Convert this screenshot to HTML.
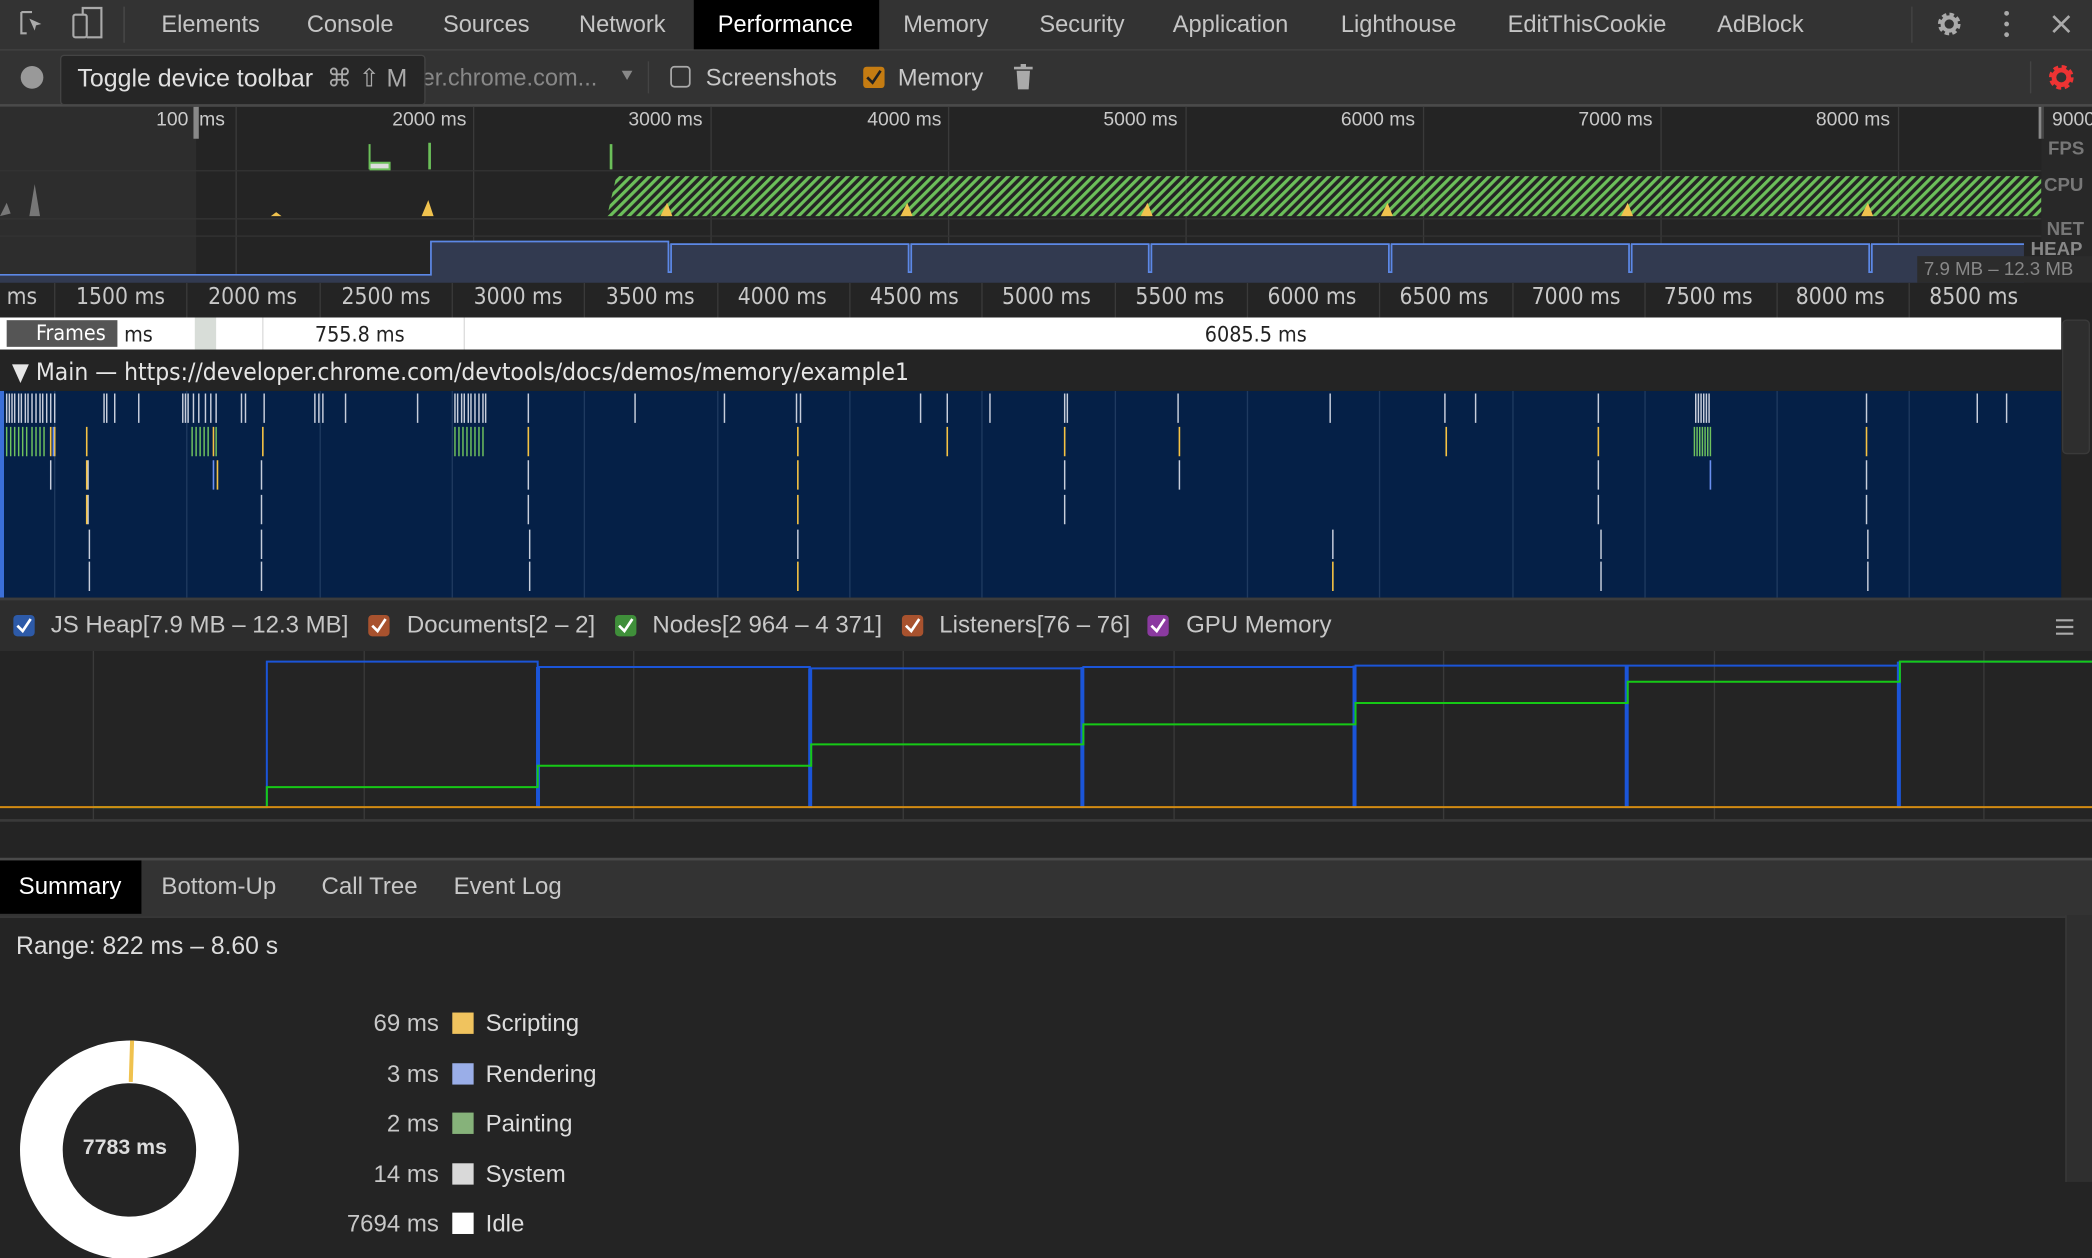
<!DOCTYPE html>
<html><head><meta charset="utf-8">
<style>
html,body{margin:0;padding:0;background:#242424;overflow:hidden;width:2092px;height:1258px}
#w{position:absolute;left:0;top:0;width:1568px;height:943px;transform:scale(1.33418,1.33404);transform-origin:0 0;font-family:"Liberation Sans",Arial,sans-serif;color:#c8c8c8}
.a{position:absolute;white-space:nowrap}
.t{font-size:17.7px;top:8px;color:#c5c5c5}
svg{position:absolute;left:0;top:0}
.r{top:213px;font-size:17px;font-family:'DejaVu Sans Condensed','DejaVu Sans',sans-serif}
.o{top:82px;font-size:14.5px}
.l{top:458px;font-size:18px}
</style></head><body><div id="w">
<!-- tab bar -->
<div class="a" style="left:0;top:0;width:1568px;height:37px;background:#333;border-bottom:1px solid #444"></div>
<svg width="100" height="37"><path d="M16 9h8M16 9v16h4" stroke="#aaa" stroke-width="1.6" fill="none"/><path d="M22 14l9 4-4 1-1 4z" fill="#aaa"/><rect x="55" y="11" width="10" height="17" rx="1.5" stroke="#aaa" stroke-width="1.6" fill="none"/><path d="M62 11V6h14v22H65" stroke="#aaa" stroke-width="1.6" fill="none"/><line x1="93" y1="5" x2="93" y2="32" stroke="#4a4a4a"/></svg>
<div class="a" style="left:520px;top:0;width:139px;height:37px;background:#000"></div>
<div class="a t" style="left:121px">Elements</div>
<div class="a t" style="left:230px">Console</div>
<div class="a t" style="left:332px">Sources</div>
<div class="a t" style="left:434px">Network</div>
<div class="a t" style="left:538px;color:#fff">Performance</div>
<div class="a t" style="left:677px">Memory</div>
<div class="a t" style="left:779px">Security</div>
<div class="a t" style="left:879px">Application</div>
<div class="a t" style="left:1005px">Lighthouse</div>
<div class="a t" style="left:1130px">EditThisCookie</div>
<div class="a t" style="left:1287px">AdBlock</div>
<svg style="left:1430px" width="138" height="37"><line x1="3" y1="5" x2="3" y2="32" stroke="#444"/><circle cx="31" cy="18" r="6.5" fill="none" stroke="#aaa" stroke-width="4" stroke-dasharray="3 2.1"/><circle cx="31" cy="18" r="5" fill="none" stroke="#aaa" stroke-width="3"/><circle cx="74" cy="10" r="1.8" fill="#aaa"/><circle cx="74" cy="18" r="1.8" fill="#aaa"/><circle cx="74" cy="26" r="1.8" fill="#aaa"/><path d="M109 12l12 12M121 12l-12 12" stroke="#aaa" stroke-width="2"/></svg>
<!-- toolbar -->
<div class="a" style="left:0;top:38px;width:1568px;height:40px;background:#333;border-bottom:2px solid #4a4a4a"></div>
<svg style="top:38px" width="1568" height="40"><circle cx="24" cy="20" r="8.5" fill="#999"/><path d="M466 15h8l-4 7z" fill="#888"/><line x1="486" y1="8" x2="486" y2="32" stroke="#444"/><rect x="503" y="12" width="14" height="15" rx="2.5" fill="none" stroke="#aaa" stroke-width="1.3"/><rect x="647" y="12" width="16" height="16" rx="2.5" fill="#c57c12"/><path d="M650 20l4 4 6-9" stroke="#222" stroke-width="2" fill="none"/><path d="M760 13h14M765 11h4" stroke="#aaa" stroke-width="2"/><path d="M762 15h10l-1 14h-8z" fill="#aaa"/><line x1="1522" y1="8" x2="1522" y2="32" stroke="#444"/><circle cx="1545" cy="20" r="7" fill="none" stroke="#e33" stroke-width="4.5" stroke-dasharray="3.2 2.3"/><circle cx="1545" cy="20" r="5.5" fill="none" stroke="#e33" stroke-width="3.5"/></svg>
<div class="a" style="left:316px;top:48px;font-size:17.7px;color:#888">er.chrome.com...</div>
<div class="a" style="left:45px;top:41px;width:272px;height:36px;background:#262626;border:1px solid #444;border-radius:3px"></div>
<div class="a" style="left:58px;top:48px;font-size:18.7px;color:#e0e0e0">Toggle device toolbar <span style="color:#aaa">&nbsp;⌘ ⇧ M</span></div>
<div class="a" style="left:529px;top:48px;font-size:17.7px">Screenshots</div>
<div class="a" style="left:673px;top:48px;font-size:17.7px">Memory</div>
<!-- overview -->
<svg style="top:80px" width="1568" height="132">
<defs><pattern id="h" width="5" height="5" patternUnits="userSpaceOnUse" patternTransform="rotate(45)"><rect width="2.4" height="5" fill="#6cbf5a"/></pattern></defs>
<rect x="0" y="0" width="147" height="132" fill="#2d2d2d"/>
<g stroke="#3a3a3a"><line x1="177" y1="0" x2="177" y2="132"/><line x1="355" y1="0" x2="355" y2="132"/><line x1="533" y1="0" x2="533" y2="132"/><line x1="711" y1="0" x2="711" y2="132"/><line x1="889" y1="0" x2="889" y2="132"/><line x1="1067" y1="0" x2="1067" y2="132"/><line x1="1245" y1="0" x2="1245" y2="132"/><line x1="1423" y1="0" x2="1423" y2="132"/></g>
<line x1="0" y1="48" x2="1530" y2="48" stroke="#333"/><line x1="0" y1="84" x2="1530" y2="84" stroke="#333"/><line x1="0" y1="97" x2="1530" y2="97" stroke="#333"/>
<path d="M277 28v19M277 47h15v-5h-15" stroke="#6bbf59" fill="#ddd" stroke-width="1.5"/><path d="M322 27v20M458 28v19" stroke="#6bbf59" stroke-width="2"/>
<path d="M455 82L462 52H1530V82Z" fill="url(#h)"/>
<path d="M0 82l5-10 3 8zM22 82l4-24 4 24z" fill="#777"/>
<g fill="#f0c24e"><path d="M316 82l5-12 4 12zM495 82l5-10 4 10zM675 82l5-10 4 10zM855 82l5-10 4 10zM1035 82l5-10 4 10zM1215 82l5-10 4 10zM1395 82l5-10 4 10zM203 82l4-3 4 3z"/></g>
<path d="M0 126H323V101H501V103H681V103H861V103H1041V103H1221V103H1401V103H1517V132H0Z" fill="#323a50"/>
<path d="M0 126H323V101H501V124H503V103H681V124H683V103H861V124H863V103H1041V124H1043V103H1221V124H1223V103H1401V124H1403V103H1517" stroke="#5c88e6" fill="none" stroke-width="1.3"/>
<rect x="145" y="0" width="4" height="24" fill="#888"/><rect x="1528" y="0" width="4" height="24" fill="#888"/>
<rect x="1530" y="0" width="38" height="132" fill="#2b2b2b" opacity=".7"/>
<rect x="1437" y="112" width="131" height="20" fill="#2c2c2c"/>
</svg>
<div class="a o" style="left:117px;color:#ccc">100&nbsp;&nbsp;ms</div>
<div class="a o" style="left:294px">2000 ms</div>
<div class="a o" style="left:471px">3000 ms</div>
<div class="a o" style="left:650px">4000 ms</div>
<div class="a o" style="left:827px">5000 ms</div>
<div class="a o" style="left:1005px">6000 ms</div>
<div class="a o" style="left:1183px">7000 ms</div>
<div class="a o" style="left:1361px">8000 ms</div>
<div class="a o" style="left:1538px">9000</div>
<div class="a" style="top:103px;left:1535px;font-size:14px;font-weight:bold;color:#777">FPS</div>
<div class="a" style="top:130px;left:1532px;font-size:14px;font-weight:bold;color:#777">CPU</div>
<div class="a" style="top:163px;left:1534px;font-size:14px;font-weight:bold;color:#777">NET</div>
<div class="a" style="top:178px;left:1522px;font-size:14px;font-weight:bold;color:#888">HEAP</div>
<div class="a" style="top:193px;left:1442px;font-size:14px;color:#888">7.9 MB – 12.3 MB</div>
<!-- ruler2 -->
<svg style="top:212px" width="1568" height="240">
<rect x="0" y="0" width="1568" height="26" fill="#242424"/>
<g stroke="#3a3a3a"><line x1="41" y1="0" x2="41" y2="26"/><line x1="140" y1="0" x2="140" y2="26"/><line x1="240" y1="0" x2="240" y2="26"/><line x1="339" y1="0" x2="339" y2="26"/><line x1="438" y1="0" x2="438" y2="26"/><line x1="538" y1="0" x2="538" y2="26"/><line x1="637" y1="0" x2="637" y2="26"/><line x1="736" y1="0" x2="736" y2="26"/><line x1="836" y1="0" x2="836" y2="26"/><line x1="935" y1="0" x2="935" y2="26"/><line x1="1034" y1="0" x2="1034" y2="26"/><line x1="1134" y1="0" x2="1134" y2="26"/><line x1="1233" y1="0" x2="1233" y2="26"/><line x1="1332" y1="0" x2="1332" y2="26"/><line x1="1431" y1="0" x2="1431" y2="26"/></g>
<rect x="0" y="26" width="1545" height="24" fill="#fff"/>
<rect x="5" y="28" width="83" height="20" fill="#555"/>
<rect x="146" y="26" width="16" height="24" fill="#d8ddd8"/>
<line x1="197" y1="26" x2="197" y2="50" stroke="#ddd"/><line x1="348" y1="26" x2="348" y2="50" stroke="#ddd"/>
<rect x="1545" y="26" width="23" height="210" fill="#242424"/><rect x="1546" y="28" width="20" height="100" rx="3" fill="#2e2e2e" stroke="#3a3a3a"/>
</svg>
<div class="a r" style="left:5px">ms</div>
<div class="a r" style="left:57px">1500 ms</div>
<div class="a r" style="left:156px">2000 ms</div>
<div class="a r" style="left:256px">2500 ms</div>
<div class="a r" style="left:355px">3000 ms</div>
<div class="a r" style="left:454px">3500 ms</div>
<div class="a r" style="left:553px">4000 ms</div>
<div class="a r" style="left:652px">4500 ms</div>
<div class="a r" style="left:751px">5000 ms</div>
<div class="a r" style="left:851px">5500 ms</div>
<div class="a r" style="left:950px">6000 ms</div>
<div class="a r" style="left:1049px">6500 ms</div>
<div class="a r" style="left:1148px">7000 ms</div>
<div class="a r" style="left:1247px">7500 ms</div>
<div class="a r" style="left:1346px">8000 ms</div>
<div class="a r" style="left:1446px">8500 ms</div>
<div class="a" style="top:240px;left:27px;font-size:16px;color:#fff;font-family:'DejaVu Sans Condensed','DejaVu Sans',sans-serif">Frames</div>
<div class="a" style="top:241px;left:93px;font-size:16px;color:#222;font-family:'DejaVu Sans Condensed','DejaVu Sans',sans-serif">ms</div>
<div class="a" style="top:241px;left:236px;font-size:16px;color:#222;font-family:'DejaVu Sans Condensed','DejaVu Sans',sans-serif">755.8 ms</div>
<div class="a" style="top:241px;left:903px;font-size:16px;color:#222;font-family:'DejaVu Sans Condensed','DejaVu Sans',sans-serif">6085.5 ms</div>
<!-- main -->
<div class="a" style="left:0;top:263px;width:1545px;height:30px;background:#242424"></div>
<div class="a" style="top:269px;left:9px;font-size:18.3px;color:#e6e6e6;font-family:'DejaVu Sans Condensed','DejaVu Sans',sans-serif">▼ Main — https://developer.chrome.com/devtools/docs/demos/memory/example1</div>
<svg style="top:293px" width="1545" height="155">
<rect width="1545" height="155" fill="#052047"/>
<rect width="3" height="155" fill="#3b6fd8"/>
<g stroke="#1f3a60"><line x1="41" y1="0" x2="41" y2="155"/><line x1="140" y1="0" x2="140" y2="155"/><line x1="240" y1="0" x2="240" y2="155"/><line x1="339" y1="0" x2="339" y2="155"/><line x1="438" y1="0" x2="438" y2="155"/><line x1="538" y1="0" x2="538" y2="155"/><line x1="637" y1="0" x2="637" y2="155"/><line x1="736" y1="0" x2="736" y2="155"/><line x1="836" y1="0" x2="836" y2="155"/><line x1="935" y1="0" x2="935" y2="155"/><line x1="1034" y1="0" x2="1034" y2="155"/><line x1="1134" y1="0" x2="1134" y2="155"/><line x1="1233" y1="0" x2="1233" y2="155"/><line x1="1332" y1="0" x2="1332" y2="155"/><line x1="1431" y1="0" x2="1431" y2="155"/></g>
<g stroke="#c8cedc" stroke-width="1.1">
<path d="M5 2v22M7 2v22M9 2v22M11 2v22M14 2v22M16 2v22M19 2v22M21 2v22M24 2v22M27 2v22M30 2v22M32 2v22M35 2v22M38 2v22M41 2v22M78 2v22M80 2v22M86 2v22M104 2v22M137 2v22M139 2v22M141 2v22M145 2v22M149 2v22M154 2v22M158 2v22M162 2v22M181 2v22M184 2v22M198 2v22M236 2v22M239 2v22M242 2v22M259 2v22M313 2v22M341 2v22M343 2v22M346 2v22M348 2v22M351 2v22M353 2v22M356 2v22M359 2v22M362 2v22M364 2v22M396 2v22M476 2v22M543 2v22M597 2v22M600 2v22M690 2v22M710 2v22M742 2v22M798 2v22M800 2v22M883 2v22M997 2v22M1083 2v22M1106 2v22M1198 2v22M1271 2v22M1273 2v22M1275 2v22M1277 2v22M1279 2v22M1281 2v22M1399 2v22M1482 2v22M1504 2v22"/>
<path d="M38 52v22M66 52v22M66 78v22M196 52v22M196 78v22M196 104v22M196 128v22M396 52v22M396 78v22M397 104v22M397 128v22M798 52v22M798 78v22M884 52v22M1198 52v22M1198 78v22M1200 104v22M1200 128v22M1399 52v22M1399 78v22M1400 104v22M1400 128v22M999 104v22M598 104v22M67 104v22M67 128v22"/>
</g>
<g stroke="#6fc25e" stroke-width="1.1"><path d="M5 27v22M8 27v22M11 27v22M14 27v22M17 27v22M20 27v22M24 27v22M27 27v22M30 27v22M33 27v22M144 27v22M147 27v22M150 27v22M153 27v22M156 27v22M162 27v22M341 27v22M344 27v22M347 27v22M350 27v22M353 27v22M356 27v22M359 27v22M362 27v22M1270 27v22M1272 27v22M1274 27v22M1276 27v22M1278 27v22M1280 27v22M1282 27v22"/></g>
<g stroke="#f5c244" stroke-width="1.2"><path d="M38 27v22M41 27v22M65 27v22M160 27v22M197 27v22M396 27v22M598 27v22M710 27v22M798 27v22M884 27v22M1084 27v22M1198 27v22M1399 27v22M65 52v22M163 52v22M598 52v22M65 78v22M598 78v22M598 128v22M999 128v22"/></g>
<g stroke="#6a8ff0" stroke-width="1.2"><path d="M40 27v22M160 52v22M1282 52v22"/></g>
</svg>
<!-- memory legend -->
<div class="a" style="left:0;top:448px;width:1568px;height:40px;background:#2d2d2d;border-top:2px solid #3c3c3c;border-bottom:2px solid #333"></div>
<svg style="top:450px" width="1568" height="38">
<rect x="10" y="11" width="16" height="16" rx="3" fill="#2d5aa8"/><path d="M13 19l4 4 6-9" stroke="#fff" stroke-width="2" fill="none"/>
<rect x="276" y="11" width="16" height="16" rx="3" fill="#a8522e"/><path d="M279 19l4 4 6-9" stroke="#fff" stroke-width="2" fill="none"/>
<rect x="461" y="11" width="16" height="16" rx="3" fill="#3f8f3a"/><path d="M464 19l4 4 6-9" stroke="#fff" stroke-width="2" fill="none"/>
<rect x="676" y="11" width="16" height="16" rx="3" fill="#a8522e"/><path d="M679 19l4 4 6-9" stroke="#fff" stroke-width="2" fill="none"/>
<rect x="860" y="11" width="16" height="16" rx="3" fill="#8b3aa0"/><path d="M863 19l4 4 6-9" stroke="#fff" stroke-width="2" fill="none"/>
<path d="M1541 15h13M1541 20h13M1541 25h13" stroke="#aaa" stroke-width="1.6"/>
</svg>
<div class="a l" style="left:38px">JS Heap[7.9 MB – 12.3 MB]</div>
<div class="a l" style="left:305px">Documents[2 – 2]</div>
<div class="a l" style="left:489px">Nodes[2 964 – 4 371]</div>
<div class="a l" style="left:704px">Listeners[76 – 76]</div>
<div class="a l" style="left:889px">GPU Memory</div>
<!-- memory graph -->
<svg style="top:488px" width="1568" height="160">
<rect width="1568" height="127" fill="#242424"/>
<g stroke="#3a3a3a"><line x1="70" y1="0" x2="70" y2="127"/><line x1="273" y1="0" x2="273" y2="127"/><line x1="475" y1="0" x2="475" y2="127"/><line x1="677" y1="0" x2="677" y2="127"/><line x1="880" y1="0" x2="880" y2="127"/><line x1="1082" y1="0" x2="1082" y2="127"/><line x1="1285" y1="0" x2="1285" y2="127"/><line x1="1487" y1="0" x2="1487" y2="127"/></g>
<path d="M70 117H200V8H403V117H404V12H607V117H608V13H811V117H812V12H1015V117H1016V11H1219V117H1220V11H1423V117H1424V8H1568" stroke="#1b55d8" stroke-width="1.5" fill="none"/>
<path d="M403 12V117M607 13V117M811 12V117M1015 11V117M1219 11V117M1423 8V117" stroke="#1b55d8" stroke-width="2.5"/>
<path d="M70 117H200V102H403V86H608V70H812V55H1016V39H1220V23H1424V8H1568" stroke="#16c916" stroke-width="1.5" fill="none"/>
<line x1="0" y1="117" x2="1568" y2="117" stroke="#d38b12" stroke-width="1.5"/>
<line x1="0" y1="127" x2="1568" y2="127" stroke="#3a3a3a" stroke-width="2"/>
</svg>
<div class="a" style="left:0;top:643px;width:1568px;height:42px;background:#333;border-top:2px solid #4a4a4a;border-bottom:1px solid #3a3a3a"></div>
<div class="a" style="left:0;top:645px;width:106px;height:40px;background:#000"></div>
<div class="a" style="top:654px;left:14px;font-size:18px;color:#fff">Summary</div>
<div class="a" style="top:654px;left:121px;font-size:18px">Bottom-Up</div>
<div class="a" style="top:654px;left:241px;font-size:18px">Call Tree</div>
<div class="a" style="top:654px;left:340px;font-size:18px">Event Log</div>
<div class="a" style="left:1548px;top:686px;width:20px;height:200px;background:#2f2f2f;border-left:1px solid #3a3a3a"></div>
<div class="a" style="top:698px;left:12px;font-size:18.5px;color:#ddd">Range: 822 ms – 8.60 s</div>
<svg style="top:770px" width="200" height="173">
<circle cx="97" cy="92" r="66" fill="none" stroke="#fff" stroke-width="32"/>
<path d="M99 10L98 41" stroke="#f0c24e" stroke-width="3"/>
</svg>
<div class="a" style="top:852px;left:62px;font-size:16px;font-weight:bold;color:#ddd">7783 ms</div>
<div class="a" style="top:757px;left:230px;width:99px;text-align:right;font-size:18px">69 ms</div>
<div class="a" style="top:795px;left:230px;width:99px;text-align:right;font-size:18px">3 ms</div>
<div class="a" style="top:832px;left:230px;width:99px;text-align:right;font-size:18px">2 ms</div>
<div class="a" style="top:870px;left:230px;width:99px;text-align:right;font-size:18px">14 ms</div>
<div class="a" style="top:907px;left:230px;width:99px;text-align:right;font-size:18px">7694 ms</div>
<div class="a" style="top:759px;left:339px;width:16px;height:16px;background:#f0c35e"></div>
<div class="a" style="top:797px;left:339px;width:16px;height:16px;background:#9aaee8"></div>
<div class="a" style="top:834px;left:339px;width:16px;height:16px;background:#86b27a"></div>
<div class="a" style="top:872px;left:339px;width:16px;height:16px;background:#d9d9d9"></div>
<div class="a" style="top:909px;left:339px;width:16px;height:16px;background:#fff"></div>
<div class="a" style="top:757px;left:364px;font-size:18px;color:#ddd">Scripting</div>
<div class="a" style="top:795px;left:364px;font-size:18px;color:#ddd">Rendering</div>
<div class="a" style="top:832px;left:364px;font-size:18px;color:#ddd">Painting</div>
<div class="a" style="top:870px;left:364px;font-size:18px;color:#ddd">System</div>
<div class="a" style="top:907px;left:364px;font-size:18px;color:#ddd">Idle</div>
</div></body></html>
